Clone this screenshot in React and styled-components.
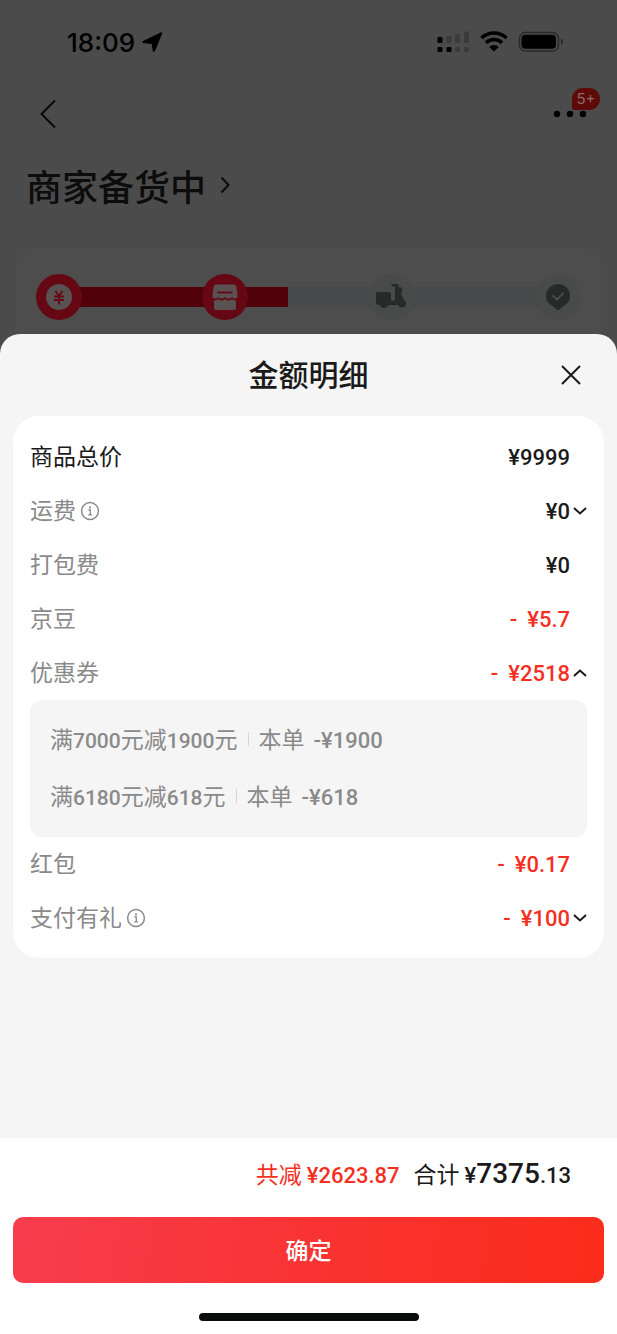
import { useState } from "react";
import styled, { createGlobalStyle, css } from "styled-components";


const couponList = [
    { rule: ["满", "7000", "元减", "1900", "元"], amount: "¥1900" },
    { rule: ["满", "6180", "元减", "618", "元"], amount: "¥618" },
];

const feeList = [
    { id: "goods", label: "商品总价", value: "¥9999", strong: true },
    { id: "freight", label: "运费", value: "¥0", info: true, toggle: true },
    { id: "pack", label: "打包费", value: "¥0" },
    { id: "bean", label: "京豆", value: "¥5.7", minus: true },
    { id: "coupon", label: "优惠券", value: "¥2518", minus: true, toggle: true, details: couponList },
    { id: "packet", label: "红包", value: "¥0.17", minus: true },
    { id: "gift", label: "支付有礼", value: "¥100", minus: true, info: true, toggle: true },
];

const StatusIcons = () =>{
    return(
        <svg width="128" height="24" viewBox="0 0 128 24" aria-hidden="true">
            <g fill="#000">
                <rect x="1.500" y="7" width="5" height="6" rx="1" />
                <rect x="1.500" y="17" width="5" height="5" rx="1" />
                <rect x="10.500" y="17" width="5" height="5" rx="1" />
            </g>
            <g fill="#3b3b3b">
                <rect x="10.500" y="6" width="5" height="7" rx="1" />
                <rect x="19" y="4" width="5" height="9" rx="1" />
                <rect x="28" y="1.500" width="5" height="11.500" rx="1" />
                <rect x="19" y="17" width="5" height="5" rx="1" />
                <rect x="28" y="17" width="5" height="5" rx="1" />
            </g>
            <g fill="none" stroke="#000" strokeWidth="3.6">
                <path d="M45.5 8a18 18 0 0 1 25 0" />
                <path d="M50 12.800a11.500 11.500 0 0 1 16 0" />
            </g>
            <path d="M53.300 17a6.500 6.500 0 0 1 9.400 0L58 21.500z" fill="#000" />
            <rect x="83.500" y="2.500" width="39" height="18.500" rx="6" fill="none" stroke="#2a2a2a" strokeWidth="1.500" />
            <rect x="85.500" y="4.700" width="34.500" height="14" rx="4" fill="#000" />
            <path d="M125 8.500c2.600.8 2.600 5.700 0 6.500z" fill="#2a2a2a" />
        </svg>
    )
}

const Arrow = ({ up }) =>{
    return(
        <svg width="16" height="10" viewBox="0 0 16 10" aria-hidden="true">
            <path d={up ? "M2 8L8 2.500L14 8" : "M2 2L8 7.500L14 2"} fill="none" stroke="#1a1a1a" strokeWidth="2" />
        </svg>
    )
}

const Info = () =>{
    return(
        <svg width="20" height="20" viewBox="0 0 20 20" aria-hidden="true">
            <circle cx="10" cy="10" r="8.400" fill="none" stroke="#8a8a8a" strokeWidth="1.500" />
            <circle cx="10" cy="6.400" r="1.100" fill="#8a8a8a" />
            <path d="M8.400 9H10.300V13.800M8.200 13.800H12" fill="none" stroke="#8a8a8a" strokeWidth="1.300" />
        </svg>
    )
}

const Progress = () =>{
    return(
        <Track>
            <TrackDone />
            <Step $done>
                <svg width="46" height="46" viewBox="0 0 46 46" aria-hidden="true">
                    <circle cx="23" cy="23" r="13" fill="#5a5152" />
                    <path d="M19.500 17l3.500 5 3.500-5M23 22v8.500M18 22.500h10M18 26h10" fill="none" stroke="#650813" strokeWidth="1.800" />
                </svg>
            </Step>
            <Step $done>
                <svg width="46" height="46" viewBox="0 0 46 46" aria-hidden="true">
                    <path d="M14 10.500h18q2 0 2.500 2.500l1 8q.3 3-2 3.500-2 .3-3.500-1.500-1.500 1.500-3.500 1.500T23 23q-1.500 1.500-3.500 1.500T16 23q-1.500 1.800-3.500 1.500-2.300-.5-2-3.500l1-8q.5-2.500 2.500-2.500z" fill="#5a5152" />
                    <path d="M12 26.500q2.500 0 4-1.500 1.500 1.500 3.500 1.500T23 25q1.500 1.500 3.500 1.500T30 25q1.500 1.500 4 1.500V34q0 2-2 2H14q-2 0-2-2z" fill="#5a5152" />
                    <path d="M15.500 18.500h15" stroke="#650813" strokeWidth="1.800" />
                </svg>
            </Step>
            <Step>
                <svg width="46" height="46" viewBox="0 0 46 46" aria-hidden="true">
                    <path d="M7 19q0-1 1-1h12q2 0 2 2v5q0 2 2 2t2-2V13l-3.500-1v-2H29l1 3.500h3v4.500l-1 1.500 3 6.500q2.500 1.500 2 4-.8 3.500-4 3.500-3 0-4-2.500h-9.500q-1.500 3-4.500 3t-4-2.500L7 30z" fill="#282929" />
                </svg>
            </Step>
            <Step>
                <svg width="46" height="46" viewBox="0 0 46 46" aria-hidden="true">
                    <path d="M23 10a12 12 0 0 1 12 12c0 6-4 8.500-8 11l-2.500 2.500q-1.500 1.200-3 0L19 33c-4-2.500-8-5-8-11a12 12 0 0 1 12-12z" fill="#282929" />
                    <path d="M17.500 21.500l4.500 4 6.500-6.500" fill="none" stroke="#4b4d4d" strokeWidth="1.800" />
                </svg>
            </Step>
        </Track>
    )
}

const App = () =>{

    const [opened , setOpened] = useState("coupon");

    const toggleRow =(id)=>{
        setOpened(opened === id ? "" : id);
    }

    return(
        <Container>
            <GlobalStyle />
            <Backdrop>
                <StatusBar>
                    <Clock>
                        18:09
                        <svg width="22" height="22" viewBox="0 0 22 22" aria-hidden="true">
                            <path d="M19.800 1.500q2-.6 1.300 1.300L14 20q-1.300 2-2.300 0L10.800 13 2.200 12q-1.600-.8-.2-2z" fill="#000" />
                        </svg>
                    </Clock>
                    <StatusIcons />
                </StatusBar>
                <NavBar>
                    <IconButton aria-label="返回">
                        <svg width="18" height="30" viewBox="0 0 18 30" aria-hidden="true">
                            <path d="M16 1.500L2.500 15L16 28.500" fill="none" stroke="#080808" strokeWidth="2" />
                        </svg>
                    </IconButton>
                    <MoreButton aria-label="更多">
                        <svg width="34" height="8" viewBox="0 0 34 8" aria-hidden="true">
                            <circle cx="4" cy="4" r="3.200" />
                            <circle cx="17" cy="4" r="3.200" />
                            <circle cx="30" cy="4" r="3.200" />
                        </svg>
                        <Badge>5+</Badge>
                    </MoreButton>
                </NavBar>
                <OrderTitle>
                    商家备货中
                    <svg width="10" height="18" viewBox="0 0 10 18" aria-hidden="true">
                        <path d="M1.500 1.500L8.500 9L1.500 16.500" fill="none" stroke="#0c0c0c" strokeWidth="2" />
                    </svg>
                </OrderTitle>
                <OrderCard>
                    <Progress />
                </OrderCard>
            </Backdrop>
            <Sheet>
                <SheetHeader>
                    <h2>金额明细</h2>
                    <IconButton aria-label="关闭">
                        <svg width="22" height="22" viewBox="0 0 22 22" aria-hidden="true">
                            <path d="M2 2L20 20M20 2L2 20" fill="none" stroke="#1a1a1a" strokeWidth="2" />
                        </svg>
                    </IconButton>
                </SheetHeader>
                <FeeCard>
                    {feeList.map((fee)=>{
                        return(
                            <div key={fee.id}>
                                <FeeRow>
                                    <Label $strong={fee.strong}>
                                        <span>{fee.label}</span>
                                        {fee.info && <Info />}
                                    </Label>
                                    <Amount $minus={fee.minus}>
                                        {fee.minus && <span>-</span>}
                                        {fee.value}
                                    </Amount>
                                    <Side>
                                        {fee.toggle &&
                                            <IconButton aria-label={fee.label} onClick={()=>toggleRow(fee.id)}>
                                                <Arrow up={opened === fee.id} />
                                            </IconButton>
                                        }
                                    </Side>
                                </FeeRow>
                                {fee.details && opened === fee.id &&
                                    <CouponBox>
                                        {fee.details.map((coupon)=>{
                                            return(
                                                <Coupon key={coupon.amount}>
                                                    <span>
                                                        {coupon.rule.map((part, i)=>(
                                                            i % 2 ? <b key={i}>{part}</b> : part
                                                        ))}
                                                    </span>
                                                    <Divider />
                                                    <span>本单</span>
                                                    <CouponAmount>-{coupon.amount}</CouponAmount>
                                                </Coupon>
                                            )
                                        })}
                                    </CouponBox>
                                }
                            </div>
                        )
                    })}
                </FeeCard>
                <Footer>
                    <Summary>
                        <Saved>共减<b>¥2623.87</b></Saved>
                        <Total>合计<b>¥<big>7375</big>.13</b></Total>
                    </Summary>
                    <Confirm>确定</Confirm>
                    <HomeBar />
                </Footer>
            </Sheet>
        </Container>
    )
}

const GlobalStyle = createGlobalStyle`
    *{
        box-sizing: border-box;
    }
    body{
        margin: 0;
        background-color: #4b4b4b;
        font-family: "Noto Sans CJK SC", sans-serif;
    }
    svg{
        display: block;
        flex: none;
    }
`

const numberFont = css`
    font-family: Roboto, "Noto Sans CJK SC", sans-serif;
    font-size: 22px;
    font-weight: 500;
`

const Container = styled.div`
    min-height: 100vh;
    display: flex;
    flex-direction: column;
`

const Backdrop = styled.div`
    color: #0c0c0c;
`

const StatusBar = styled.div`
    display: flex;
    justify-content: space-between;
    align-items: center;
    height: 84px;
    padding: 0 53px 0 67px;
`

const Clock = styled.div`
    display: flex;
    align-items: center;
    gap: 6px;
    font: 500 26px Inter, sans-serif;
    color: #000;
`

const IconButton = styled.button`
    display: flex;
    padding: 0;
    border: none;
    background: none;
    cursor: pointer;
`

const NavBar = styled.div`
    display: flex;
    justify-content: space-between;
    align-items: center;
    height: 60px;
    padding: 0 30px 0 39px;
`

const MoreButton = styled(IconButton)`
    position: relative;
`

const Badge = styled.span`
    position: absolute;
    left: 19px;
    bottom: 8px;
    width: 28px;
    height: 22px;
    border-radius: 11px 11px 11px 2px;
    background-color: #5e0a08;
    color: #8a6968;
    font: 15px/22px Inter, sans-serif;
    text-align: center;
`

const OrderTitle = styled.h1`
    display: flex;
    align-items: center;
    gap: 14px;
    margin: 0;
    padding: 14px 26px 36px;
    font-size: 36px;
    line-height: 54px;
    font-weight: 500;
`

const OrderCard = styled.div`
    margin: 0 16px;
    padding: 26px 20px 14px;
    border-radius: 16px 16px 0 0;
    background-color: #4d4d4d;
`

const Track = styled.div`
    display: flex;
    justify-content: space-between;
    position: relative;
    background: linear-gradient(#474a4a, #474a4a) center / 90% 20px no-repeat;
`

const TrackDone = styled.div`
    position: absolute;
    left: 18px;
    top: 13px;
    width: 43%;
    height: 20px;
    background-color: #4f0008;
`

const Step = styled.div`
    position: relative;
    border-radius: 50%;
    background-color: ${(props) => (props.$done ? "#650813" : "#494b4b")};
`

const Sheet = styled.div`
    flex: 1;
    display: flex;
    flex-direction: column;
    border-radius: 20px 20px 0 0;
    background-color: #f5f5f5;
    overflow: hidden;
`

const SheetHeader = styled.div`
    display: grid;
    grid-template-columns: 1fr auto 1fr;
    align-items: center;
    height: 82px;
    padding: 0 35px;
    h2{
        grid-column: 2;
        margin: 0;
        padding-bottom: 4px;
        color: #1a1a1a;
        font-size: 30px;
        font-weight: 500;
    }
    button{
        justify-self: end;
    }
`

const FeeCard = styled.div`
    margin: 0 13px;
    padding: 14px 17px 13px;
    border-radius: 26px;
    background-color: #fff;
`

const FeeRow = styled.div`
    display: flex;
    align-items: center;
    height: 54px;
`

const Label = styled.div`
    flex: 1;
    display: flex;
    align-items: center;
    gap: 4px;
    color: ${(props) => (props.$strong ? "#1a1a1a" : "#8a8a8a")};
    font-size: 23px;
    span{
        padding-bottom: 4px;
    }
`

const Amount = styled.div`
    ${numberFont}
    color: ${(props) => (props.$minus ? "#f52f1f" : "#1a1a1a")};
    span{
        margin-right: 10px;
    }
`

const Side = styled.div`
    width: 17px;
    padding-left: 2px;
`

const CouponBox = styled.div`
    padding: 10px 20px 13px;
    border-radius: 12px;
    background-color: #f5f5f5;
`

const Coupon = styled.div`
    display: flex;
    align-items: baseline;
    height: 57px;
    color: #8a8a8a;
    font-size: 23px;
    line-height: 57px;
    b{
        ${numberFont}
        font-size: 21px;
    }
`

const CouponAmount = styled.span`
    ${numberFont}
    margin-left: 9px;
`

const Divider = styled.i`
    align-self: center;
    width: 1px;
    height: 14px;
    margin: 0 10px;
    background-color: #d5d5d5;
`

const Footer = styled.div`
    margin-top: auto;
    padding: 0 13px 13px;
    background-color: #fff;
`

const Summary = styled.div`
    display: flex;
    justify-content: flex-end;
    align-items: baseline;
    gap: 14px;
    padding: 11px 33px 17px 0;
    line-height: 48px;
    font-size: 23px;
    b{
        ${numberFont}
        margin-left: 5px;
    }
    big{
        font-size: 28px;
    }
`

const Saved = styled.span`
    color: #f52f1f;
`

const Total = styled.span`
    color: #1a1a1a;
`

const Confirm = styled.button`
    display: block;
    width: 100%;
    height: 66px;
    padding: 0 0 2px;
    border: none;
    border-radius: 10px;
    background: linear-gradient(100deg, #f73d4e, #f93333 50%, #fb2c1a);
    color: #fff;
    font-family: inherit;
    font-size: 23px;
    font-weight: 500;
    cursor: pointer;
`

const HomeBar = styled.div`
    width: 220px;
    height: 8px;
    margin: 30px auto 0;
    border-radius: 4px;
    background-color: #0a0d0c;
`

export default App;
